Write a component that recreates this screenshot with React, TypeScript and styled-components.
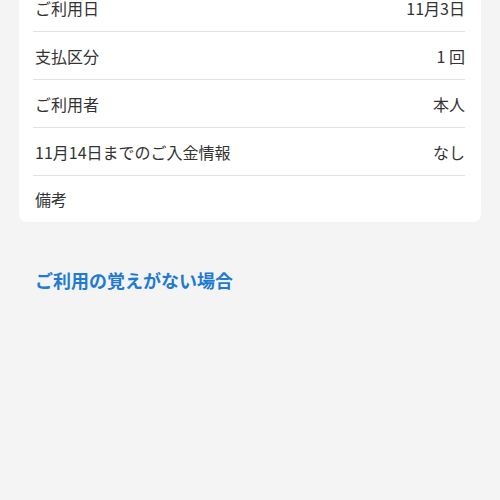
import React from "react";
import styled, { createGlobalStyle } from "styled-components";

const Global = createGlobalStyle`
  html, body { margin: 0; padding: 0; background: #f4f4f4; }
  body { font-family: "Noto Sans CJK JP", "Noto Sans", sans-serif; -webkit-font-smoothing: antialiased; }
`;

const Page = styled.div`
  width: 500px;
  height: 500px;
  overflow: hidden;
  background: #f4f4f4;
`;

const Card = styled.div`
  margin: -16px 19px 0 19px;
  background: #ffffff;
  border-radius: 0 0 8px 8px;
  display: flex;
  flex-direction: column;
`;

const Row = styled.div<{ $last?: boolean }>`
  height: ${(p) => (p.$last ? "46px" : "47px")};
  margin: 0 16px 0 14px;
  padding-left: 2px;
  display: flex;
  align-items: center;
  justify-content: space-between;
  border-bottom: ${(p) => (p.$last ? "none" : "1px solid #e2e2e2")};
  font-size: 16px;
  color: #333333;
`;

const Label = styled.span``;
const Value = styled.span``;

const Link = styled.a`
  display: block;
  margin: 46px 0 0 35px;
  font-size: 18px;
  line-height: 24px;
  font-weight: 700;
  color: #1f7bd1;
  text-decoration: none;
`;

const rows: [string, string][] = [
  ["ご利用日", "11月3日"],
  ["支払区分", "1 回"],
  ["ご利用者", "本人"],
  ["11月14日までのご入金情報", "なし"],
  ["備考", ""],
];

export default function App() {
  return (
    <Page>
      <Global />
      <Card>
        {rows.map(([l, v], i) => (
          <Row key={l} $last={i === rows.length - 1}>
            <Label>{l}</Label>
            <Value>{v}</Value>
          </Row>
        ))}
      </Card>
      <Link href="#">ご利用の覚えがない場合</Link>
    </Page>
  );
}
